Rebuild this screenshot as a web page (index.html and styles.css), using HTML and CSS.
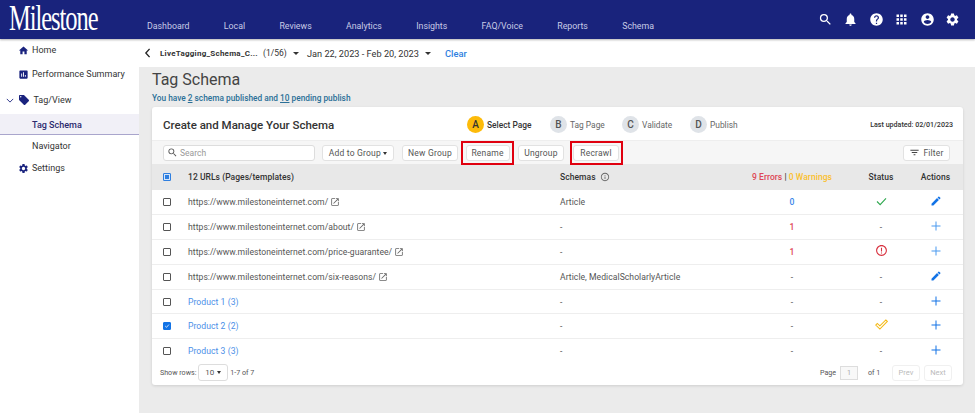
FILE: index.html
```html
<!DOCTYPE html>
<html lang="en">
<head>
    <meta charset="UTF-8">
    <meta name="viewport" content="width=device-width, initial-scale=1.0">
    <title>Tag Schema</title>
    <link rel="stylesheet" href="styles.css">
</head>
<body>
    <svg class="defs" aria-hidden="true">
        <symbol id="i-search" viewBox="0 0 24 24"><path d="M15.5 14h-.79l-.28-.27A6.471 6.471 0 0 0 16 9.5 6.5 6.5 0 1 0 9.5 16c1.61 0 3.09-.59 4.23-1.57l.27.28v.79l5 4.99L20.49 19l-4.99-5zm-6 0C7.01 14 5 11.99 5 9.5S7.01 5 9.5 5 14 7.01 14 9.5 11.99 14 9.5 14z"/></symbol>
        <symbol id="i-bell" viewBox="0 0 24 24"><path d="M12 22c1.1 0 2-.9 2-2h-4c0 1.1.89 2 2 2zm6-6v-5c0-3.07-1.64-5.64-4.5-6.32V4c0-.83-.67-1.5-1.5-1.5s-1.5.67-1.5 1.5v.68C7.63 5.36 6 7.92 6 11v5l-2 2v1h16v-1l-2-2z"/></symbol>
        <symbol id="i-help" viewBox="0 0 24 24"><path d="M12 2C6.48 2 2 6.48 2 12s4.48 10 10 10 10-4.48 10-10S17.52 2 12 2zm1 17h-2v-2h2v2zm2.07-7.75l-.9.92C13.45 12.9 13 13.5 13 15h-2v-.5c0-1.1.45-2.1 1.17-2.83l1.24-1.26c.37-.36.59-.86.59-1.41 0-1.1-.9-2-2-2s-2 .9-2 2H8c0-2.21 1.79-4 4-4s4 1.79 4 4c0 .88-.36 1.68-.93 2.25z"/></symbol>
        <symbol id="i-apps" viewBox="0 0 24 24"><path d="M4 8h4V4H4v4zm6 12h4v-4h-4v4zm-6 0h4v-4H4v4zm0-6h4v-4H4v4zm6 0h4v-4h-4v4zm6-10v4h4V4h-4zm-6 4h4V4h-4v4zm6 6h4v-4h-4v4zm0 6h4v-4h-4v4z"/></symbol>
        <symbol id="i-account" viewBox="0 0 24 24"><path d="M12 2C6.48 2 2 6.48 2 12s4.48 10 10 10 10-4.48 10-10S17.52 2 12 2zm0 3c1.66 0 3 1.34 3 3s-1.34 3-3 3-3-1.34-3-3 1.34-3 3-3zm0 14.2c-2.5 0-4.71-1.28-6-3.22.03-1.99 4-3.08 6-3.08 1.99 0 5.97 1.09 6 3.08-1.29 1.94-3.5 3.22-6 3.22z"/></symbol>
        <symbol id="i-gear" viewBox="0 0 24 24"><path d="M19.14 12.94c.04-.3.06-.61.06-.94 0-.32-.02-.64-.07-.94l2.03-1.58c.18-.14.23-.41.12-.61l-1.92-3.32c-.12-.22-.37-.29-.59-.22l-2.39.96c-.5-.38-1.03-.7-1.62-.94l-.36-2.54c-.04-.24-.24-.41-.48-.41h-3.84c-.24 0-.43.17-.47.41l-.36 2.54c-.59.24-1.13.57-1.62.94l-2.39-.96c-.22-.08-.47 0-.59.22L2.74 8.87c-.12.21-.08.47.12.61l2.03 1.58c-.05.3-.09.63-.09.94s.02.64.07.94l-2.03 1.58c-.18.14-.23.41-.12.61l1.92 3.32c.12.22.37.29.59.22l2.39-.96c.5.38 1.03.7 1.62.94l.36 2.54c.05.24.24.41.48.41h3.84c.24 0 .44-.17.47-.41l.36-2.54c.59-.24 1.13-.56 1.62-.94l2.39.96c.22.08.47 0 .59-.22l1.92-3.32c.12-.22.07-.47-.12-.61l-2.01-1.58zM12 15.6c-1.98 0-3.6-1.62-3.6-3.6s1.62-3.6 3.6-3.6 3.6 1.62 3.6 3.6-1.62 3.6-3.6 3.6z"/></symbol>
        <symbol id="i-home" viewBox="0 0 24 24"><path d="M10 20v-6h4v6h5v-8h3L12 3 2 12h3v8z"/></symbol>
        <symbol id="i-chart" viewBox="0 0 24 24"><path d="M19 3H5c-1.1 0-2 .9-2 2v14c0 1.1.9 2 2 2h14c1.1 0 2-.9 2-2V5c0-1.1-.9-2-2-2zM9 17H7v-7h2v7zm4 0h-2V7h2v10zm4 0h-2v-4h2v4z"/></symbol>
        <symbol id="i-tag" viewBox="0 0 24 24"><path d="M21.41 11.58l-9-9C12.05 2.22 11.55 2 11 2H4c-1.1 0-2 .9-2 2v7c0 .55.22 1.05.59 1.42l9 9c.36.36.86.58 1.41.58.55 0 1.05-.22 1.41-.59l7-7c.37-.36.59-.86.59-1.41 0-.55-.23-1.06-.59-1.42zM5.5 7C4.67 7 4 6.33 4 5.5S4.67 4 5.5 4 7 4.67 7 5.5 6.33 7 5.5 7z"/></symbol>
        <symbol id="i-pencil" viewBox="0 0 24 24"><path d="M3 17.25V21h3.75L17.81 9.94l-3.75-3.75L3 17.25zM20.71 7.04c.39-.39.39-1.02 0-1.41l-2.34-2.34c-.39-.39-1.02-.39-1.41 0l-1.83 1.83 3.75 3.75 1.83-1.83z"/></symbol>
        <symbol id="i-open" viewBox="0 0 24 24"><path d="M19 19H5V5h7V3H5c-1.11 0-2 .9-2 2v14c0 1.1.89 2 2 2h14c1.1 0 2-.9 2-2v-7h-2v7zM14 3v2h3.59l-9.83 9.83 1.41 1.41L19 6.41V10h2V3h-7z"/></symbol>
        <symbol id="i-filter" viewBox="0 0 24 24"><path d="M10 18h4v-2h-4v2zM3 6v2h18V6H3zm3 7h12v-2H6v2z"/></symbol>
        <symbol id="i-info" viewBox="0 0 24 24"><path d="M11 7h2v2h-2zm0 4h2v6h-2zm1-9C6.48 2 2 6.48 2 12s4.48 10 10 10 10-4.48 10-10S17.52 2 12 2zm0 18c-4.41 0-8-3.59-8-8s3.59-8 8-8 8 3.59 8 8-3.59 8-8 8z"/></symbol>
        <symbol id="i-plus" viewBox="0 0 24 24"><path d="M21 13h-8v8h-2v-8H3v-2h8V3h2v8h8z"/></symbol>
        <symbol id="i-alert" viewBox="0 0 24 24"><path d="M11 7h2v7h-2zm0 8.5h2v2h-2zM12 2C6.48 2 2 6.48 2 12s4.48 10 10 10 10-4.48 10-10S17.52 2 12 2zm0 18c-4.41 0-8-3.59-8-8s3.59-8 8-8 8 3.59 8 8-3.59 8-8 8z"/></symbol>
    </svg>

    <header class="topbar">
        <div class="logo">Milestone</div>
        <nav class="topnav">
            <a>Dashboard</a>
            <a>Local</a>
            <a>Reviews</a>
            <a>Analytics</a>
            <a>Insights</a>
            <a>FAQ/Voice</a>
            <a>Reports</a>
            <a>Schema</a>
        </nav>
        <div class="topicons">
            <svg class="icon-top"><use href="#i-search"/></svg>
            <svg class="icon-top"><use href="#i-bell"/></svg>
            <svg class="icon-top"><use href="#i-help"/></svg>
            <svg class="icon-top"><use href="#i-apps"/></svg>
            <svg class="icon-top"><use href="#i-account"/></svg>
            <svg class="icon-top"><use href="#i-gear"/></svg>
        </div>
    </header>

    <div class="layout">
        <aside class="sidebar">
            <div class="side-item side-home"><svg class="icon-side"><use href="#i-home"/></svg>Home</div>
            <div class="side-item side-perf"><svg class="icon-side"><use href="#i-chart"/></svg>Performance Summary</div>
            <div class="side-item side-tag">
                <svg class="side-chevron" viewBox="0 0 10 6"><path d="M1 1l4 4 4-4" fill="none" stroke="#1a237e" stroke-width="1.1"/></svg>
                <svg class="icon-side"><use href="#i-tag"/></svg>Tag/View
            </div>
            <div class="side-sub side-active">Tag Schema</div>
            <div class="side-sub">Navigator</div>
            <div class="side-item side-settings"><svg class="icon-side"><use href="#i-gear"/></svg>Settings</div>
        </aside>

        <main class="main">
            <div class="subbar">
                <div class="back-tab"><svg viewBox="0 0 8 12" class="back-icon"><path d="M6.5 1L2 6l4.5 5" fill="none" stroke="#222" stroke-width="1.6"/></svg></div>
                <span class="site-name">LiveTagging_Schema_C...</span>
                <span class="site-count">(1/56)</span>
                <span class="caret caret-site"></span>
                <span class="date-range">Jan 22, 2023 - Feb 20, 2023</span>
                <span class="caret caret-date"></span>
                <a class="clear">Clear</a>
            </div>

            <div class="content">
                <h1 class="page-title">Tag Schema</h1>
                <p class="page-note">You have <u>2</u> schema published and <u>10</u> pending publish</p>

                <section class="card">
                    <div class="card-head">
                        <h2 class="card-title">Create and Manage Your Schema</h2>
                        <div class="steps">
                            <div class="step step-a"><span class="step-dot dot-on">A</span><span class="step-on">Select Page</span></div>
                            <div class="step step-b"><span class="step-dot">B</span>Tag Page</div>
                            <div class="step step-c"><span class="step-dot">C</span>Validate</div>
                            <div class="step"><span class="step-dot">D</span>Publish</div>
                        </div>
                        <div class="updated">Last updated: 02/01/2023</div>
                    </div>

                    <div class="toolbar">
                        <div class="search"><svg class="icon-search"><use href="#i-search"/></svg>Search</div>
                        <button class="btn btn-add">Add to Group <span class="caret caret-btn"></span></button>
                        <button class="btn btn-new">New Group</button>
                        <div class="red-box red-rename"><button class="btn btn-rename">Rename</button></div>
                        <button class="btn btn-ungroup">Ungroup</button>
                        <div class="red-box red-recrawl"><button class="btn btn-recrawl">Recrawl</button></div>
                        <button class="btn btn-filter"><svg class="icon-filter"><use href="#i-filter"/></svg>Filter</button>
                    </div>

                    <table class="grid">
                        <colgroup>
                            <col class="col-check"><col class="col-url"><col class="col-schema"><col class="col-errors"><col class="col-status"><col class="col-actions">
                        </colgroup>
                        <thead>
                            <tr>
                                <th><span class="box box-some"></span></th>
                                <th>12 URLs (Pages/templates)</th>
                                <th>Schemas <svg class="icon-info"><use href="#i-info"/></svg></th>
                                <th class="center"><span class="red">9 Errors</span> | <span class="amber">0 Warnings</span></th>
                                <th class="center">Status</th>
                                <th class="center">Actions</th>
                            </tr>
                        </thead>
                        <tbody>
                            <tr>
                                <td><span class="box"></span></td>
                                <td>https://www.milestoneinternet.com/ <svg class="icon-open"><use href="#i-open"/></svg></td>
                                <td>Article</td>
                                <td class="center num blue">0</td>
                                <td class="center"><svg class="icon-check" viewBox="0 0 12 10"><path d="M1 5l3.5 3.5L11 1.5" fill="none" stroke="#2fa84f" stroke-width="1.2"/></svg></td>
                                <td class="center"><svg class="icon-act solid"><use href="#i-pencil"/></svg></td>
                            </tr>
                            <tr>
                                <td><span class="box"></span></td>
                                <td>https://www.milestoneinternet.com/about/ <svg class="icon-open"><use href="#i-open"/></svg></td>
                                <td>-</td>
                                <td class="center num red">1</td>
                                <td class="center">-</td>
                                <td class="center"><svg class="icon-act light"><use href="#i-plus"/></svg></td>
                            </tr>
                            <tr>
                                <td><span class="box"></span></td>
                                <td>https://www.milestoneinternet.com/price-guarantee/ <svg class="icon-open"><use href="#i-open"/></svg></td>
                                <td>-</td>
                                <td class="center num red">1</td>
                                <td class="center"><svg class="icon-alert"><use href="#i-alert"/></svg></td>
                                <td class="center"><svg class="icon-act light"><use href="#i-plus"/></svg></td>
                            </tr>
                            <tr>
                                <td><span class="box"></span></td>
                                <td>https://www.milestoneinternet.com/six-reasons/ <svg class="icon-open"><use href="#i-open"/></svg></td>
                                <td>Article, MedicalScholarlyArticle</td>
                                <td class="center">-</td>
                                <td class="center">-</td>
                                <td class="center"><svg class="icon-act solid"><use href="#i-pencil"/></svg></td>
                            </tr>
                            <tr>
                                <td><span class="box"></span></td>
                                <td class="group">Product 1 (3)</td>
                                <td>-</td>
                                <td class="center">-</td>
                                <td class="center">-</td>
                                <td class="center"><svg class="icon-act solid"><use href="#i-plus"/></svg></td>
                            </tr>
                            <tr>
                                <td><span class="box box-on"><svg viewBox="0 0 10 10"><path d="M2 5l2.2 2.2L8.2 2.6" fill="none" stroke="#fff" stroke-width="1.3"/></svg></span></td>
                                <td class="group">Product 2 (2)</td>
                                <td>-</td>
                                <td class="center">-</td>
                                <td class="center"><svg class="icon-double" viewBox="0 0 12 10"><path d="M.7 5.5L2.1 4l2.4 2.2L10 .8l1.4 1.4-6.9 7z" fill="none" stroke="#f5b914"/></svg></td>
                                <td class="center"><svg class="icon-act solid"><use href="#i-plus"/></svg></td>
                            </tr>
                            <tr>
                                <td><span class="box"></span></td>
                                <td class="group">Product 3 (3)</td>
                                <td>-</td>
                                <td class="center">-</td>
                                <td class="center">-</td>
                                <td class="center"><svg class="icon-act solid"><use href="#i-plus"/></svg></td>
                            </tr>
                        </tbody>
                    </table>

                    <div class="card-foot">
                        <span>Show rows:</span>
                        <span class="rows-select">10 <span class="caret caret-btn"></span></span>
                        <span>1-7 of 7</span>
                        <span class="pager">
                            <span>Page</span>
                            <span class="page-input">1</span>
                            <span class="page-of">of 1</span>
                            <button class="btn-page">Prev</button>
                            <button class="btn-page">Next</button>
                        </span>
                    </div>
                </section>
            </div>
        </main>
    </div>
</body>
</html>
```

FILE: styles.css
```css
* {
    box-sizing: border-box;
}
html, body {
    height: 100%;
}
body {
    margin: 0;
    overflow: hidden;
    font-family: Roboto, "Liberation Sans", sans-serif;
    font-size: 9px;
    color: #444;
    background: #ebebeb;
}
.defs {
    display: block;
    width: 0;
    height: 0;
}

/* top bar */
.topbar {
    display: flex;
    align-items: flex-start;
    height: 39px;
    background: #19237c;
    box-shadow: 0 1px 2px rgba(0, 0, 0, 0.3);
    position: relative;
    z-index: 2;
}
.logo {
    width: 147px;
    padding-left: 9px;
    font-family: "Liberation Serif", serif;
    font-size: 35px;
    line-height: 38px;
    letter-spacing: -1.5px;
    color: #fff;
    transform-origin: 9px 50%;
    transform: scaleX(0.7);
}
.topnav {
    display: flex;
    gap: 34.3px;
    padding-top: 20.5px;
    font-size: 8.8px;
    line-height: 11px;
    color: #c8cbe6;
}
.topicons {
    display: flex;
    gap: 10.5px;
    margin-left: auto;
    padding: 11.5px 15px 0 0;
}
.icon-top {
    width: 15px;
    height: 15px;
    fill: #fff;
}

/* layout */
.layout {
    display: flex;
    height: 374px;
}
.sidebar {
    width: 139px;
    flex: none;
    background: #fff;
    color: #333;
    font-size: 9px;
}
.side-item {
    display: flex;
    align-items: center;
    height: 12px;
    padding-left: 18px;
}
.side-home {
    margin-top: 5px;
}
.side-perf {
    margin-top: 12px;
}
.side-tag {
    margin-top: 14px;
    padding-left: 6px;
}
.side-settings {
    margin-top: 6px;
}
.icon-side {
    width: 11px;
    height: 11px;
    margin-right: 3px;
    fill: #1a237e;
}
.side-chevron {
    width: 8px;
    height: 5px;
    margin-right: 3.5px;
}
.side-tag .icon-side {
    width: 12px;
    height: 12px;
    margin-right: 4px;
}
.side-sub {
    height: 21px;
    line-height: 23px;
    padding-left: 32px;
    margin-top: 0;
}
.side-active {
    margin-top: 8px;
    background: #f1f0f7;
    border-bottom: 1px solid #a9a5cc;
    color: #2b2a6e;
    font-weight: 500;
}

/* main column */
.main {
    flex: 1;
    min-width: 0;
}
.subbar {
    display: flex;
    align-items: center;
    height: 28px;
    background: #fff;
    color: #333;
}
.back-tab {
    width: 15px;
    padding-left: 5px;
    margin-right: 6px;
}
.back-icon {
    display: block;
    width: 7px;
    height: 10px;
}
.site-name {
    width: 103px;
    font-size: 8px;
    font-weight: 700;
    letter-spacing: 0.25px;
    white-space: nowrap;
}
.site-count {
    width: 30px;
    font-size: 8.5px;
}
.caret {
    display: inline-block;
    width: 0;
    height: 0;
    border-left: 3px solid transparent;
    border-right: 3px solid transparent;
    border-top: 3.5px solid #333;
    vertical-align: middle;
}
.date-range {
    margin-left: 8px;
    width: 118px;
    font-size: 9.2px;
}
.clear {
    margin-left: 14px;
    font-size: 9.3px;
    font-weight: 500;
    color: #2f7fe0;
}
.content {
    padding: 0 12px 0 13px;
}
.page-title {
    margin: 0;
    padding-top: 5px;
    font-size: 16px;
    font-weight: 400;
    line-height: 16px;
    color: #444;
}
.page-note {
    margin: 5px 0 0;
    font-size: 8.3px;
    line-height: 11px;
    font-weight: 500;
    color: #2a6f97;
}

/* card */
.card {
    margin-top: 3px;
    height: 278px;
    background: #fff;
    border-radius: 3px;
    box-shadow: 0 1px 3px rgba(0, 0, 0, 0.12);
}
.card-head {
    display: flex;
    align-items: center;
    height: 33px;
    padding: 2px 10px 0 11px;
}
.card-title {
    width: 304px;
    margin: 0;
    font-size: 11.5px;
    font-weight: 500;
    color: #333;
}
.steps {
    display: flex;
    font-size: 8.4px;
    color: #666;
}
.step {
    display: flex;
    align-items: center;
    gap: 3px;
}
.step-a {
    width: 83px;
}
.step-b {
    width: 72px;
}
.step-c {
    width: 68px;
}
.step-dot {
    display: flex;
    align-items: center;
    justify-content: center;
    width: 17px;
    height: 17px;
    border-radius: 50%;
    background: #dfe3e8;
    font-size: 10px;
    font-weight: 500;
    color: #555;
}
.dot-on {
    background: #fdbb0a;
    color: #333;
}
.step-on {
    color: #333;
    font-weight: 500;
}
.updated {
    margin-left: auto;
    font-size: 7.1px;
    font-weight: 500;
    color: #333;
}

/* toolbar */
.toolbar {
    display: flex;
    align-items: center;
    height: 24px;
    padding-left: 11px;
    background: #f6f6f6;
    border-top: 1px solid #eee;
}
.search {
    display: flex;
    align-items: center;
    width: 152px;
    height: 16px;
    padding-left: 3px;
    background: #fff;
    border: 1px solid #ddd;
    border-radius: 3px;
    font-size: 8.5px;
    color: #999;
}
.icon-search {
    width: 11px;
    height: 11px;
    margin-right: 2px;
    fill: #555;
}
.btn {
    height: 16px;
    padding: 0;
    background: #fff;
    border: 1px solid #e2e2e2;
    border-radius: 3px;
    font: 8.5px Roboto, "Liberation Sans", sans-serif;
    letter-spacing: 0.2px;
    color: #555;
}
.btn-add {
    width: 72px;
    margin-left: 7px;
}
.caret-btn {
    border-left-width: 2.5px;
    border-right-width: 2.5px;
    border-top-width: 3px;
}
.btn-new {
    width: 56px;
    margin-left: 8px;
}
.red-box {
    display: flex;
    align-items: center;
    justify-content: center;
    height: 24px;
    border: 2px solid #e0000f;
}
.red-rename {
    width: 53px;
    margin-left: 3px;
}
.btn-rename {
    width: 44px;
}
.btn-ungroup {
    width: 46px;
    margin-left: 4px;
    margin-top: 1px;
}
.red-recrawl {
    width: 53px;
    margin-left: 5.5px;
}
.btn-recrawl {
    width: 46px;
}
.btn-filter {
    display: flex;
    align-items: center;
    justify-content: center;
    gap: 3px;
    width: 47px;
    margin-left: auto;
    margin-right: 13px;
}
.icon-filter {
    width: 11px;
    height: 11px;
    fill: #444;
}

/* table */
.grid {
    width: 811px;
    table-layout: fixed;
    border-collapse: collapse;
    font-size: 8.6px;
    letter-spacing: 0.05px;
}
.col-check { width: 36px; }
.col-url { width: 372px; }
.col-schema { width: 170px; }
.col-errors { width: 124px; }
.col-status { width: 54px; }
.col-actions { width: 55px; }
.grid th {
    height: 26px;
    padding: 0;
    background: #e8e8e8;
    text-align: left;
    font-size: 8.5px;
    font-weight: 500;
    color: #333;
}
.grid td {
    height: 24.8px;
    padding: 0;
    border-bottom: 1px solid #eee;
    color: #555;
}
.grid tr:last-child td {
    border-bottom: 0;
}
.grid th:first-child,
.grid td:first-child {
    padding-left: 11px;
}
.grid .center {
    text-align: center;
}
.grid .group {
    color: #4b8fe8;
}
.grid .red,
.red {
    color: #de4654;
}
.grid .amber,
.amber {
    color: #fbc02d;
}
.grid .blue {
    color: #3b86ea;
}
.num {
    font-weight: 500;
}
.box {
    display: block;
    width: 8px;
    height: 8px;
    border: 1px solid #555;
    border-radius: 1px;
    background: #fff;
}
.box-some {
    background: #2f7fe0;
    border-color: #2f7fe0;
    box-shadow: inset 0 0 0 1px #d5e6fb;
}
.box-on {
    background: #1273e6;
    border-color: #1273e6;
}
.box-on svg {
    display: block;
    width: 6px;
    height: 6px;
}
.icon-open {
    width: 10px;
    height: 10px;
    vertical-align: -2px;
    fill: #666;
}
.icon-info {
    width: 10px;
    height: 10px;
    margin-left: 2px;
    vertical-align: -2px;
    fill: #666;
}
.icon-check {
    width: 11px;
    height: 9px;
}
.icon-act {
    display: block;
    width: 12px;
    height: 12px;
    margin: -2px auto 0;
}
.solid {
    fill: #1273e6;
}
.light {
    fill: #4b9af0;
}
.icon-alert {
    display: block;
    width: 13px;
    height: 13px;
    margin: -3px auto 0;
    fill: #d8303e;
}
.icon-double {
    display: block;
    width: 13px;
    height: 11px;
    margin: -3px auto 0;
}

/* footer */
.card-foot {
    display: flex;
    align-items: center;
    gap: 2px;
    height: 21px;
    padding: 0 11px 3px 8px;
    font-size: 7.1px;
    color: #555;
}
.rows-select {
    display: flex;
    align-items: center;
    justify-content: space-between;
    width: 30px;
    height: 17px;
    padding: 0 6px;
    border: 1px solid #ddd;
    border-radius: 3px;
    font-size: 8px;
}
.pager {
    display: flex;
    align-items: center;
    margin-left: auto;
}
.page-input {
    width: 18px;
    height: 14px;
    margin-left: 4px;
    padding-left: 6px;
    line-height: 12px;
    background: #f8f8f8;
    border: 1px solid #ddd;
    color: #aaa;
}
.page-of {
    width: 30px;
    padding-left: 10px;
}
.btn-page {
    width: 28px;
    height: 16px;
    margin-left: 4px;
    padding: 0;
    background: #fff;
    border: 1px solid #f0f0f0;
    border-radius: 3px;
    font: 7.5px Roboto, "Liberation Sans", sans-serif;
    color: #bbb;
}
```
